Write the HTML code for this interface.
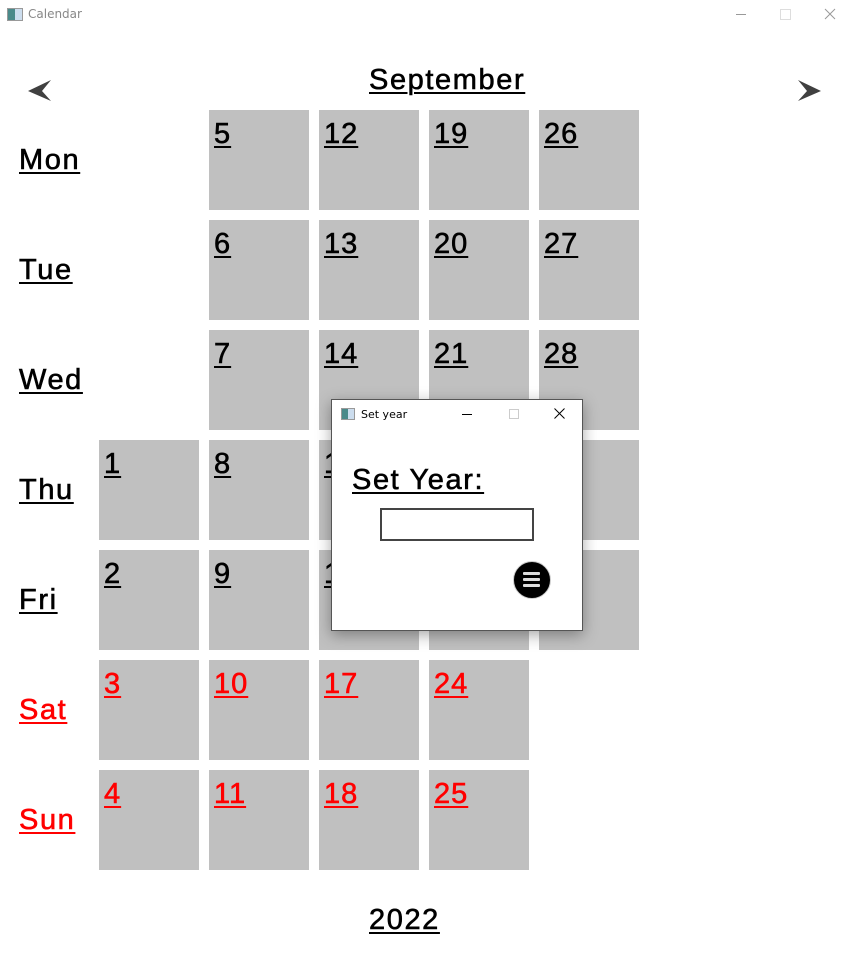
<!DOCTYPE html>
<html><head><style>
body{margin:0;width:853px;height:979px;background:#fff;position:relative;overflow:hidden;font-family:"Liberation Sans",Arial,sans-serif}
.t{position:absolute;font-size:29px;letter-spacing:1.6px;line-height:1;text-decoration:underline;text-decoration-thickness:2px;text-underline-offset:3px;color:#000;white-space:nowrap;-webkit-text-stroke:0.6px currentColor}
.r{color:#f00}
.c{position:absolute;width:100px;height:100px;background:#c0c0c0}
.c span{position:absolute;left:5px;top:10px;font-size:29px;letter-spacing:1px;line-height:1;text-decoration:underline;text-decoration-thickness:2px;text-underline-offset:3px;-webkit-text-stroke:0.6px currentColor}
</style></head><body>
<div style="position:absolute;left:7px;top:8px;width:14px;height:11px;border:1px solid #999;background:linear-gradient(90deg,#4a8a8a 0 50%,#cde 50%)"></div>
<div style="position:absolute;left:28px;top:7px;font-size:12px;color:#888;font-family:'DejaVu Sans',sans-serif">Calendar</div>
<div style="position:absolute;left:736px;top:14px;width:10px;height:1px;background:#999"></div>
<div style="position:absolute;left:780px;top:9px;width:9px;height:9px;border:1px solid #ddd"></div>
<svg style="position:absolute;left:824px;top:8px" width="12" height="12"><path d="M1 1L11 11M11 1L1 11" stroke="#999" stroke-width="1"/></svg>
<svg style="position:absolute;left:28px;top:80px" width="24" height="22"><path d="M23 0L0 11L23 21L14 11Z" fill="#404040"/></svg>
<svg style="position:absolute;left:798px;top:80px" width="24" height="22"><path d="M0 0L23 11L0 21L9 11Z" fill="#404040"/></svg>
<div class="t" style="left:369px;top:66px">September</div>
<div class="t" style="left:369px;top:906px">2022</div>
<div class="t" style="left:19px;top:146px">Mon</div>
<div class="t" style="left:19px;top:256px">Tue</div>
<div class="t" style="left:19px;top:366px">Wed</div>
<div class="t" style="left:19px;top:476px">Thu</div>
<div class="t" style="left:19px;top:586px">Fri</div>
<div class="t r" style="left:19px;top:696px">Sat</div>
<div class="t r" style="left:19px;top:806px">Sun</div>

<div class="c" style="left:209px;top:110px"><span>5</span></div>
<div class="c" style="left:319px;top:110px"><span>12</span></div>
<div class="c" style="left:429px;top:110px"><span>19</span></div>
<div class="c" style="left:539px;top:110px"><span>26</span></div>
<div class="c" style="left:209px;top:220px"><span>6</span></div>
<div class="c" style="left:319px;top:220px"><span>13</span></div>
<div class="c" style="left:429px;top:220px"><span>20</span></div>
<div class="c" style="left:539px;top:220px"><span>27</span></div>
<div class="c" style="left:209px;top:330px"><span>7</span></div>
<div class="c" style="left:319px;top:330px"><span>14</span></div>
<div class="c" style="left:429px;top:330px"><span>21</span></div>
<div class="c" style="left:539px;top:330px"><span>28</span></div>
<div class="c" style="left:99px;top:440px"><span>1</span></div>
<div class="c" style="left:209px;top:440px"><span>8</span></div>
<div class="c" style="left:319px;top:440px"><span>15</span></div>
<div class="c" style="left:429px;top:440px"><span>22</span></div>
<div class="c" style="left:539px;top:440px"><span>29</span></div>
<div class="c" style="left:99px;top:550px"><span>2</span></div>
<div class="c" style="left:209px;top:550px"><span>9</span></div>
<div class="c" style="left:319px;top:550px"><span>16</span></div>
<div class="c" style="left:429px;top:550px"><span>23</span></div>
<div class="c" style="left:539px;top:550px"><span>30</span></div>
<div class="c r" style="left:99px;top:660px"><span>3</span></div>
<div class="c r" style="left:209px;top:660px"><span>10</span></div>
<div class="c r" style="left:319px;top:660px"><span>17</span></div>
<div class="c r" style="left:429px;top:660px"><span>24</span></div>
<div class="c r" style="left:99px;top:770px"><span>4</span></div>
<div class="c r" style="left:209px;top:770px"><span>11</span></div>
<div class="c r" style="left:319px;top:770px"><span>18</span></div>
<div class="c r" style="left:429px;top:770px"><span>25</span></div>

<div style="position:absolute;left:331px;top:399px;width:250px;height:230px;background:#fff;border:1px solid #555;box-shadow:0 4px 14px rgba(0,0,0,.35)">
<div style="position:absolute;left:9px;top:8px;width:12px;height:10px;border:1px solid #999;background:linear-gradient(90deg,#4a8a8a 0 50%,#cde 50%)"></div>
<div style="position:absolute;left:29px;top:8px;font-size:11px;color:#000;font-family:'DejaVu Sans',sans-serif">Set year</div>
<div style="position:absolute;left:130px;top:14px;width:10px;height:1px;background:#000"></div>
<div style="position:absolute;left:177px;top:9px;width:8px;height:8px;border:1px solid #ccc"></div>
<svg style="position:absolute;left:222px;top:8px" width="11" height="11"><path d="M0.5 0.5L10.5 10.5M10.5 0.5L0.5 10.5" stroke="#000"/></svg>
<div class="t" style="left:20px;top:66px">Set Year:</div>
<div style="position:absolute;left:48px;top:108px;width:150px;height:29px;border:2px solid #444"></div>
<div style="position:absolute;left:181px;top:161px;width:36px;height:36px;border-radius:50%;background:#000;border:1px solid #ccc"></div>
<div style="position:absolute;left:191px;top:172px;width:17px;height:3px;background:#ddd;box-shadow:0 6px 0 #ddd,0 12px 0 #ddd;border-radius:1px"></div>
</div>
</body></html>
